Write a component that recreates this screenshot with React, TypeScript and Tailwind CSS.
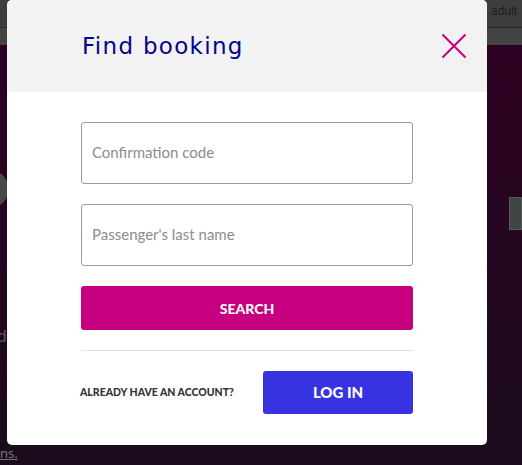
import React from "react";

export default function App() {
  return (
    <div className="relative w-[522px] h-[465px] overflow-hidden bg-[#1c0b1c] font-['Open_Sans',sans-serif]">
      {/* background page */}
      <div className="flex flex-col h-full">
        <div className="h-[28px] bg-[#3d3d3d] flex justify-end items-start pt-[2px] pr-[5px] border-b border-[#2c2c2c]">
          <span className="text-[12px] text-[#1e1e1e] font-['Liberation_Sans',sans-serif]">adult</span>
        </div>
        <div className="h-[17px] bg-[#434343]" />
        <div className="relative flex-1 bg-gradient-to-b from-[#2c0020] via-[#240620] to-[#1a0c1c]">
          <div className="absolute left-[-24px] top-[126px] w-[32px] h-[36px] rounded-full bg-[#4a4848]" />
          <div className="absolute left-[-3px] top-[281px] text-[16px] leading-[20px] text-[#5a5a5a] font-['Noto_Sans',sans-serif]">d</div>
          <div className="absolute right-0 top-[152px] w-[13px] h-[33px] bg-[#3f4646] border border-[#5a5a5a]" />
          <div className="absolute left-0 top-[399px] text-[13px] text-[#777] underline font-['Noto_Sans',sans-serif]">ns.</div>
        </div>
      </div>

      {/* modal */}
      <div className="absolute left-[7px] top-0 w-[480px] h-[445px] bg-white rounded-[5px] overflow-hidden flex flex-col">
        <div className="h-[92px] bg-[#f2f2f2] flex items-center justify-between pl-[75px] pr-[20px]">
          <h2 className="text-[23px] text-[#06038d] font-['DejaVu_Sans',sans-serif] tracking-[1.3px]">Find booking</h2>
          <svg width="26" height="26" viewBox="0 0 26 26" className="mb-[1px]">
            <path d="M1.5 1.5 L24.5 24.5 M24.5 1.5 L1.5 24.5" stroke="#c6007e" strokeWidth="2" />
          </svg>
        </div>
        <div className="flex flex-col px-[74px] pt-[30px]">
          <div className="h-[62px] border border-[#9b9b9b] rounded-[3px] flex items-center px-[10px] pb-[1px]">
            <span className="text-[15px] text-[#8c8c8c] font-['Lato',sans-serif]">Confirmation code</span>
          </div>
          <div className="h-[62px] mt-[20px] border border-[#9b9b9b] rounded-[3px] flex items-center px-[10px] pb-[1px]">
            <span className="text-[15px] text-[#8c8c8c] font-['Lato',sans-serif]">Passenger's last name</span>
          </div>
          <button className="h-[44px] mt-[20px] bg-[#c6007e] rounded-[3px] text-white text-[14px] font-black font-['Lato',sans-serif]">SEARCH</button>
          <div className="h-px bg-[#e2e2e2] mt-[20px]" />
          <div className="flex items-center justify-between mt-[20px]">
            <span className="text-[10.5px] font-black text-[#333] font-['Lato',sans-serif] -ml-px">ALREADY HAVE AN ACCOUNT?</span>
            <button className="w-[150px] h-[43px] bg-[#3733e0] rounded-[3px] text-white text-[15px] font-black font-['Lato',sans-serif]">LOG IN</button>
          </div>
        </div>
      </div>
    </div>
  );
}
